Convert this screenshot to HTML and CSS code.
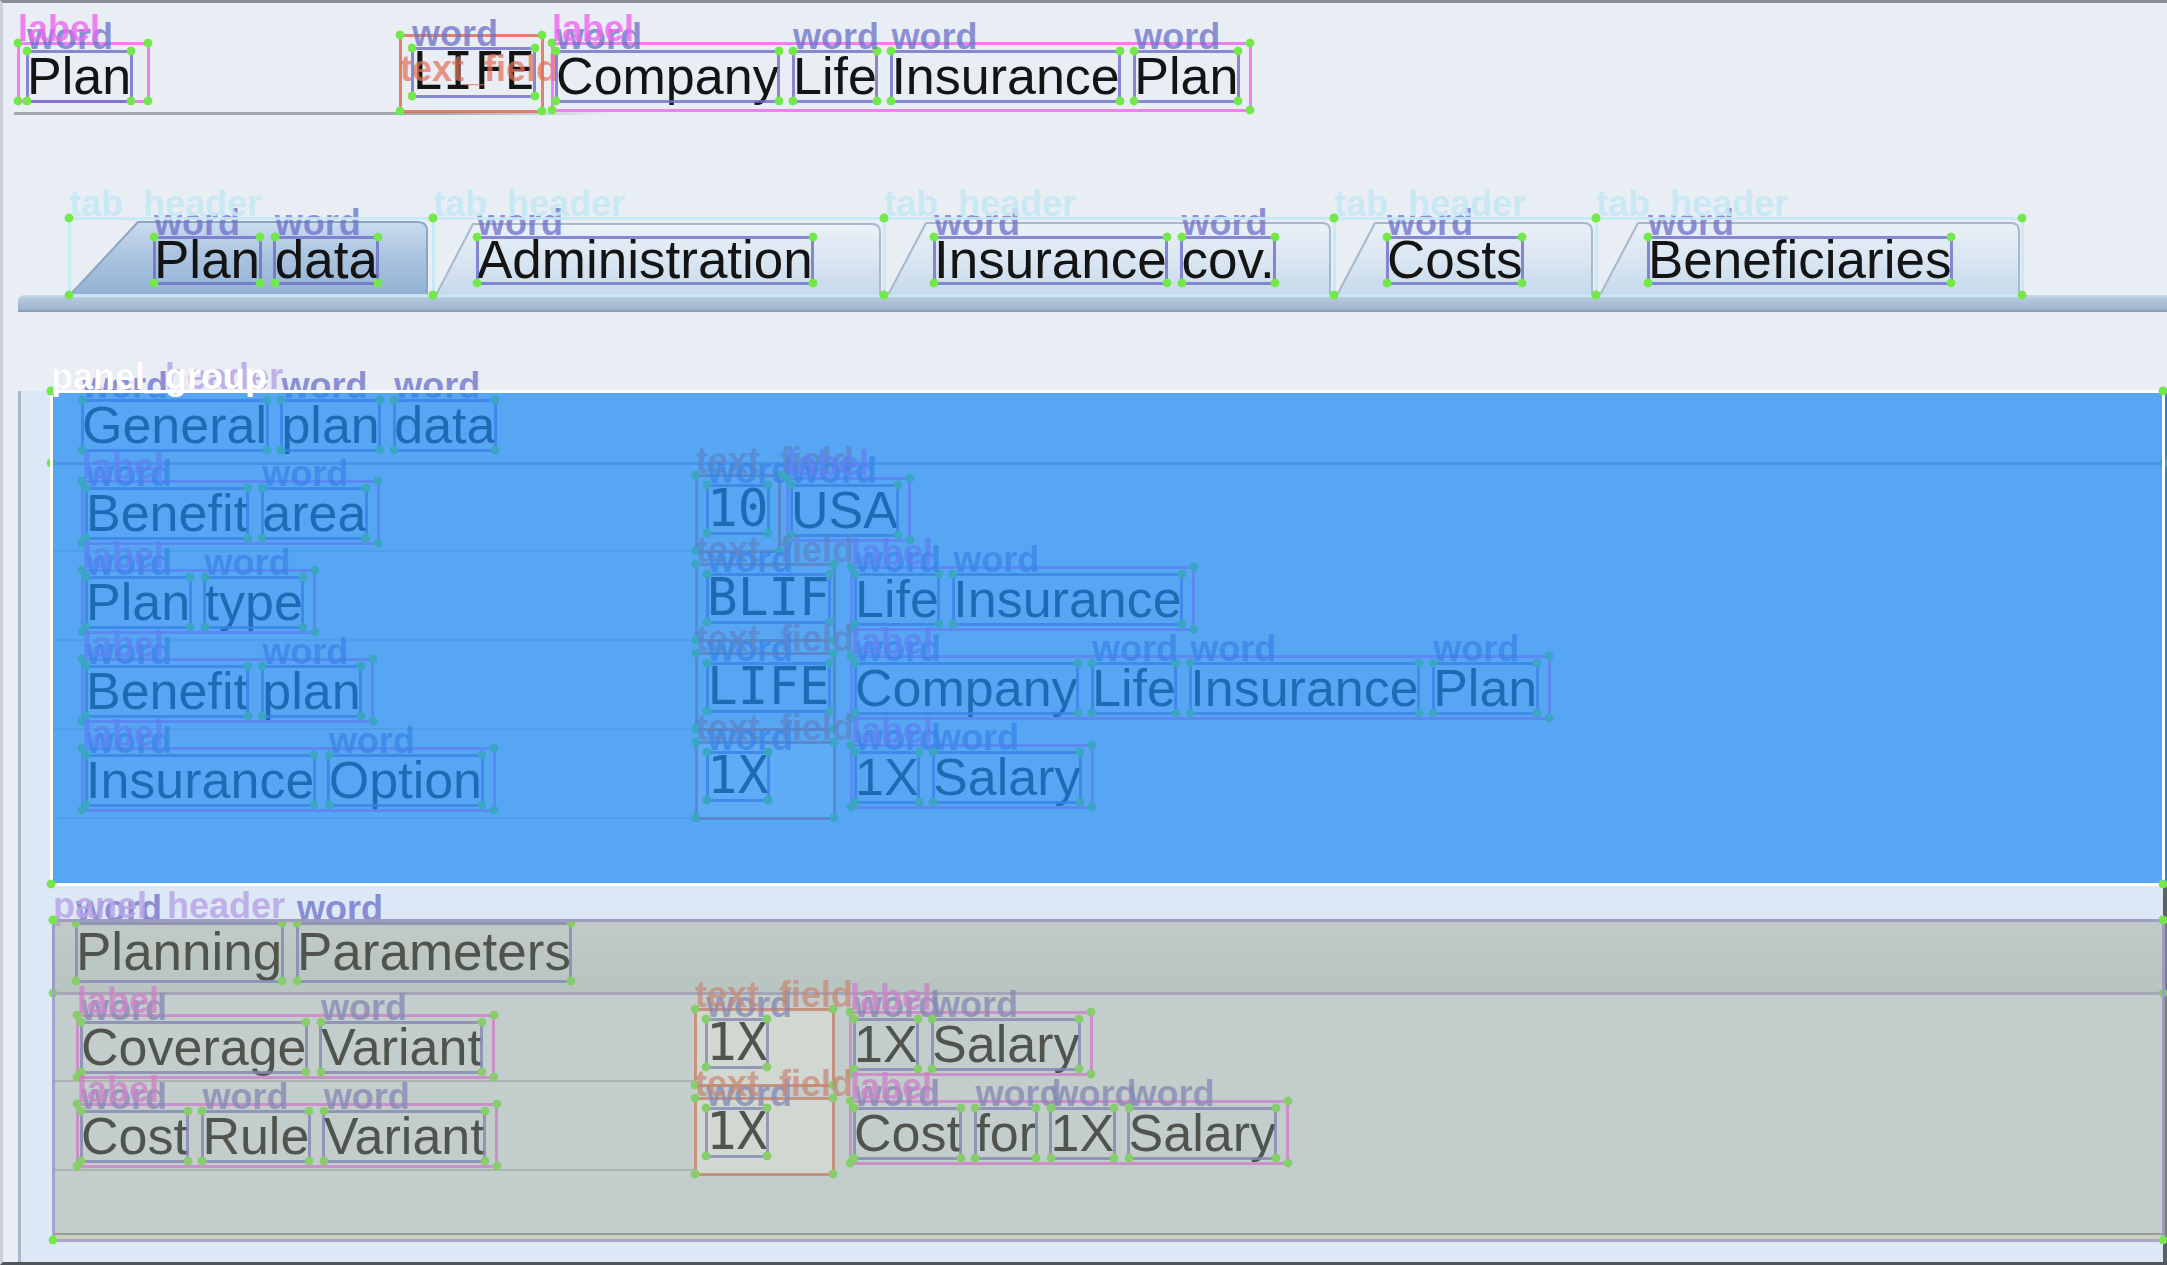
FILE: index.html
```html
<!DOCTYPE html>
<html>
<head>
<meta charset="utf-8">
<title>Plan data</title>
<link rel="stylesheet" href="styles.css">
</head>
<body>
<div class="frame">
  <svg class="defs" width="0" height="0">
    <defs>
      <linearGradient id="ga" x1="0" y1="0" x2="0" y2="1">
        <stop offset="0" stop-color="#cadcef"/>
        <stop offset="0.45" stop-color="#abc5e0"/>
        <stop offset="1" stop-color="#93b2d4"/>
      </linearGradient>
      <linearGradient id="gi" x1="0" y1="0" x2="0" y2="1">
        <stop offset="0" stop-color="#eaf1f8"/>
        <stop offset="0.5" stop-color="#dae6f2"/>
        <stop offset="1" stop-color="#c7d9eb"/>
      </linearGradient>
    </defs>
  </svg>
  <div class="top">
    <span class="lb tl-plan"><span class="w">Plan</span></span>
    <span class="tf tl-tf"><span class="w m">LIFE</span></span>
    <span class="lb tl-co"><span class="w">Company</span> <span class="w">Life</span> <span class="w">Insurance</span> <span class="w">Plan</span></span>
  </div>
  <div class="sep"></div>

  <div class="tabs">
    <div class="th t1">
      <svg class="tshape" width="364" height="77" viewBox="0 0 364 77"><path class="act" d="M1 77 L69 4 L349 4 Q358 4 358 13 L358 77 Z"/></svg>
      <span class="w">Plan</span> <span class="w">data</span>
    </div>
    <div class="th t2">
      <svg class="tshape" width="451" height="77" viewBox="0 0 451 77"><path d="M3 77 L40 6 L439 6 Q447 6 447 14 L447 77 Z"/></svg>
      <span class="w">Administration</span>
    </div>
    <div class="th t3">
      <svg class="tshape" width="450" height="77" viewBox="0 0 450 77"><path d="M4 77 L42 5 L438 5 Q446 5 446 13 L446 77 Z"/></svg>
      <span class="w">Insurance</span> <span class="w">cov.</span>
    </div>
    <div class="th t4">
      <svg class="tshape" width="262" height="77" viewBox="0 0 262 77"><path d="M3 77 L41 5 L250 5 Q258 5 258 13 L258 77 Z"/></svg>
      <span class="w">Costs</span>
    </div>
    <div class="th t5">
      <svg class="tshape" width="426" height="77" viewBox="0 0 426 77"><path d="M4 77 L42 5 L415 5 Q423 5 423 13 L423 77 Z"/></svg>
      <span class="w">Beneficiaries</span>
    </div>
  </div>
  <div class="tabbar"></div>

  <div class="content">
    <section class="pg pgx">
      <div class="gh ph"><span class="w">General</span> <span class="w">plan</span> <span class="w">data</span></div>
      <div class="row">
        <div class="lcol"><span class="lb"><span class="w">Benefit</span> <span class="w">area</span></span></div>
        <span class="tf tfn"><span class="w m">10</span></span>
        <span class="lb usa"><span class="w">USA</span></span>
      </div>
      <div class="row">
        <div class="lcol"><span class="lb"><span class="w">Plan</span> <span class="w">type</span></span></div>
        <span class="tf"><span class="w m">BLIF</span></span>
        <span class="lb"><span class="w">Life</span> <span class="w">Insurance</span></span>
      </div>
      <div class="row">
        <div class="lcol"><span class="lb"><span class="w">Benefit</span> <span class="w">plan</span></span></div>
        <span class="tf"><span class="w m">LIFE</span></span>
        <span class="lb"><span class="w">Company</span> <span class="w">Life</span> <span class="w">Insurance</span> <span class="w">Plan</span></span>
      </div>
      <div class="row">
        <div class="lcol"><span class="lb"><span class="w">Insurance</span> <span class="w">Option</span></span></div>
        <span class="tf in"><span class="w m">1X</span></span>
        <span class="lb"><span class="w">1X</span> <span class="w">Salary</span></span>
      </div>
      <div class="ov ov-blue"></div>
    </section>

    <section class="pp pbox">
      <div class="pph ph"><span class="w">Planning</span> <span class="w">Parameters</span></div>
      <div class="row prow">
        <div class="lcol"><span class="lb"><span class="w">Coverage</span> <span class="w">Variant</span></span></div>
        <span class="tf in"><span class="w m">1X</span></span>
        <span class="lb"><span class="w">1X</span> <span class="w">Salary</span></span>
      </div>
      <div class="row prow">
        <div class="lcol"><span class="lb"><span class="w">Cost</span> <span class="w">Rule</span> <span class="w">Variant</span></span></div>
        <span class="tf in"><span class="w m">1X</span></span>
        <span class="lb"><span class="w">Cost</span> <span class="w">for</span> <span class="w">1X</span> <span class="w">Salary</span></span>
      </div>
      <div class="ppfoot"></div>
      <div class="ov ov-grey"></div>
    </section>
  </div>
</div>
</body>
</html>
```

FILE: styles.css
```css
* { box-sizing: border-box; }
html, body { margin: 0; padding: 0; }
html { overflow: hidden; }
body {
  width: 2167px;
  height: 1265px;
  overflow: hidden;
  background: #e8eef4;
  font-family: "Liberation Sans", Arial, sans-serif;
  font-size: 52px;
  color: #141414;
}
.defs { position: absolute; left: 0; top: 0; width: 0; height: 0; }

.frame {
  position: relative;
  width: 2167px;
  height: 1265px;
  overflow: hidden;
  border-top: 3px solid #868d95;
  border-left: 3px solid #c9d0d8;
  border-bottom: 3px solid #51565c;
}

/* ---------- annotation boxes ---------- */
.w, .lb, .tf, .th, .ph, .pgx, .pbox {
  position: relative;
  --dot: #74e84b;
}
.w { --c: rgba(110,110,200,.8); --tc: rgba(110,110,200,.75); }
.lb { --c: rgba(240,100,240,.8); --tc: rgba(240,100,240,.8); }
.tf { --c: rgba(225,100,75,.8); --tc: rgba(228,112,90,.72); }
.th { --c: rgba(198,234,245,.9); --tc: rgba(196,233,245,.9); }
.ph { --c: rgba(160,150,200,.85); --tc: rgba(185,165,230,.85); }
.pgx { --c: #ffffff; --tc: #ffffff; }
.pbox { --c: rgba(160,155,195,.85); }

.w::before, .lb::before, .tf::before, .th::before, .ph::before, .pgx::before, .pbox::before {
  content: "";
  position: absolute;
  inset: -5px;
  pointer-events: none;
  background:
    radial-gradient(circle, var(--dot) 4px, transparent 4.8px) left top / 10px 10px no-repeat,
    radial-gradient(circle, var(--dot) 4px, transparent 4.8px) right top / 10px 10px no-repeat,
    radial-gradient(circle, var(--dot) 4px, transparent 4.8px) left bottom / 10px 10px no-repeat,
    radial-gradient(circle, var(--dot) 4px, transparent 4.8px) right bottom / 10px 10px no-repeat,
    linear-gradient(var(--c), var(--c)) 5px 3.5px / calc(100% - 10px) 3px no-repeat,
    linear-gradient(var(--c), var(--c)) 5px calc(100% - 3.5px) / calc(100% - 10px) 3px no-repeat,
    linear-gradient(var(--c), var(--c)) 3.5px 5px / 3px calc(100% - 10px) no-repeat,
    linear-gradient(var(--c), var(--c)) calc(100% - 3.5px) 5px / 3px calc(100% - 10px) no-repeat;
}
.w::after, .lb::after, .tf::after, .th::after, .ph::after, .pgx::after {
  position: absolute;
  left: 0;
  bottom: 100%;
  font: 700 36px/28px "Liberation Sans", Arial, sans-serif;
  color: var(--tc);
  white-space: nowrap;
  pointer-events: none;
}
.w::after { content: "word"; }
.lb::after { content: "label"; }
.tf::after { content: "text_field"; }
.th::after { content: "tab_header"; }
.ph::after { content: "panel_header"; }
.pgx::after { content: "panel_group"; }
.th::before, .th::after { z-index: 2; }
.pgx::before, .pgx::after, .pbox::before { z-index: 3; }

/* ---------- words ---------- */
.w {
  display: inline-block;
  height: 50px;
  line-height: 50px;
  vertical-align: top;
  white-space: nowrap;
}
.m {
  font-family: "DejaVu Sans Mono", "Liberation Mono", monospace;
  font-size: 51px;
  height: 48px;
  line-height: 48px;
}
.lb {
  display: inline-block;
  vertical-align: top;
  line-height: 50px;
  white-space: nowrap;
  padding: 7px 12px 5px 4px;
}
.tf {
  flex: none;
  display: block;
  width: 138px;
  height: 76px;
  padding: 10px 0 0 11px;
  line-height: 0;
}
.tf.tfn { width: 83px; }
.tf.in { background: #f7fafd; }

/* ---------- top row ---------- */
.top {
  display: flex;
  align-items: flex-start;
  height: 109px;
}
.lb.tl-plan { margin: 40px 0 0 15px; padding: 8px 17px 0 9px; }
.tf.tl-tf { margin: 32px 0 0 252px; width: 142px; height: 76px; padding: 13px 0 0 12px; }
.tf.tl-tf::after { bottom: auto; top: 20px; }
.lb.tl-co { margin: 40px 0 0 10px; padding: 8px 12px 9px 4px; }
.sep {
  margin-left: 11px;
  width: 600px;
  height: 3px;
  background: linear-gradient(to right, #a3a9b0 0%, #a3a9b0 70%, rgba(163,169,176,0) 100%);
}

/* ---------- tabs ---------- */
.tabs {
  display: flex;
  margin: 103px 0 0 66px;
  height: 77px;
  font-size: 53px;
}
.th {
  flex: none;
  height: 77px;
  padding-top: 19px;
  white-space: nowrap;
  line-height: 0;
}
.th .w { height: 46px; line-height: 46px; }
.t1 { width: 364px; padding-left: 85px; }
.t2 { width: 451px; padding-left: 44px; }
.t3 { width: 450px; padding-left: 50px; }
.t4 { width: 262px; padding-left: 53px; }
.t5 { width: 426px; padding-left: 52px; }
.tshape { position: absolute; left: 0; top: 0; }
.tshape path { fill: url(#gi); stroke: #a5b8cc; stroke-width: 2; }
.tshape path.act { fill: url(#ga); stroke: #8aa5c2; }

.tabbar {
  margin-left: 15px;
  height: 17px;
  border-top-left-radius: 6px;
  background: linear-gradient(#cbdae9 0%, #b2c6da 25%, #a0b7cf 80%, #7f98b1 100%);
}

/* ---------- content ---------- */
.content {
  margin-left: 15px;
  height: 950px;
  background: #dce8f5;
  border-left: 3px solid #aab7c5;
  border-right: 4px solid #5b6066;
}

.pg {
  margin: 79px 0 0 30px;
  height: 493px;
}
.gh {
  height: 72px;
  padding: 9px 0 0 31px;
  white-space: nowrap;
  line-height: 0;
}
.row {
  display: flex;
  align-items: flex-start;
  height: 89px;
  padding-left: 31px;
  background: linear-gradient(#bccbdc, #bccbdc) 0 100% / 650px 2px no-repeat;
}
.lcol {
  flex: none;
  width: 614px;
  padding-top: 18px;
  line-height: 0;
}
.row > .tf { margin-top: 12px; }
.row > .lb { margin-left: 17px; margin-top: 15px; }
.row > .lb.usa { margin-left: 8px; }

.pp {
  margin: 36px 0 0 32px;
  height: 320px;
  display: flex;
  flex-direction: column;
}
.pph {
  flex: none;
  height: 73px;
  padding: 3px 0 0 23px;
  white-space: nowrap;
  line-height: 0;
  font-size: 53px;
  background: linear-gradient(#d9e3ea, #cbd9e1);
}
.pph .w { height: 58px; line-height: 58px; }
.prow {
  flex: none;
  padding-left: 24px;
  padding-top: 4px;
  background: linear-gradient(#b3bdc8, #b3bdc8) 0 100% / 643px 2px no-repeat;
}
.prow .lcol { width: 618px; }
.ppfoot {
  margin-top: auto;
  height: 7px;
  border-top: 2px solid #8c9694;
  background: #eef0de;
}

.ov {
  position: absolute;
  inset: 0 -4px 0 0;
  z-index: 1;
  pointer-events: none;
}
.ov-blue { background: rgba(36,140,243,.72); }
.ov-grey { background: rgba(160,170,150,.43); }
```
